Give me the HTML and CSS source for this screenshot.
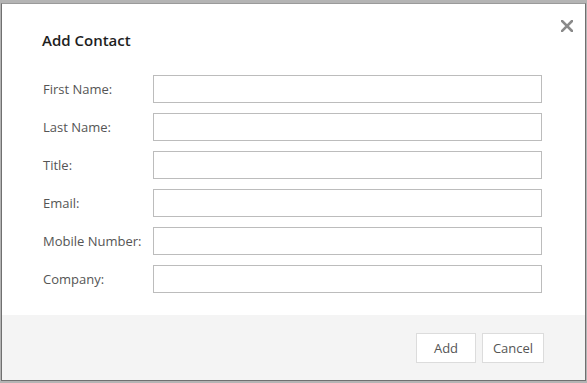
FILE: index.html
```html
<!DOCTYPE html>
<html lang="en">
<head>
  <meta charset="UTF-8" />
  <title>Add Contact</title>
  <link rel="stylesheet" href="styles.css">
</head>
<body>
  <div class="dialog">
    <button class="close" aria-label="Close">
      <svg width="12" height="12" viewBox="0 0 12 12">
        <path d="M1 1 L11 11 M11 1 L1 11" stroke="#8a8a8a" stroke-width="2.6" stroke-linecap="square" />
      </svg>
    </button>

    <div class="dialog-body">
      <h2>Add Contact</h2>
      <form class="contact-form">
        <div class="row"><label>First Name:</label><input type="text" /></div>
        <div class="row"><label>Last Name:</label><input type="text" /></div>
        <div class="row"><label>Title:</label><input type="text" /></div>
        <div class="row"><label>Email:</label><input type="text" /></div>
        <div class="row"><label>Mobile Number:</label><input type="text" /></div>
        <div class="row"><label>Company:</label><input type="text" /></div>
      </form>
    </div>

    <div class="dialog-footer">
      <button class="btn btn-add">Add</button>
      <button class="btn btn-cancel">Cancel</button>
    </div>
  </div>
</body>
</html>
```

FILE: styles.css
```css
html, body {
  height: 100%;
}
body {
  margin: 0;
  background: #b4b4b4;
  font-family: 'Open Sans', sans-serif;
  box-sizing: border-box;
  padding: 3px 1px 2px 1px;
}
.dialog {
  position: relative;
  height: 100%;
  box-sizing: border-box;
  background: #fff;
  border: 1px solid #707070;
  border-top-color: #9a9a9a;
  display: flex;
  flex-direction: column;
}
.close {
  position: absolute;
  top: 14px;
  right: 10px;
  background: transparent;
  border: none;
  padding: 2px;
  cursor: pointer;
  line-height: 0;
}
.dialog-body {
  flex: 1;
  padding: 26px 43px 0 41px;
}
h2 {
  margin: 0 0 25px -1px;
  font-size: 15px;
  line-height: 20px;
  font-weight: 600;
  color: #1e1e1e;
}
.contact-form {
  display: flex;
  flex-direction: column;
  gap: 10px;
}
.row {
  display: flex;
  align-items: center;
}
.row label {
  width: 110px;
  font-size: 13px;
  color: #555;
}
.row input {
  flex: 1;
  height: 28px;
  box-sizing: border-box;
  border: 1px solid #bcbcbc;
  margin: 0;
  padding: 4px 6px;
  font-family: inherit;
  font-size: 13px;
}
.dialog-footer {
  height: 65px;
  background: #f4f4f4;
  display: flex;
  justify-content: flex-end;
  align-items: flex-start;
  gap: 6px;
  padding: 18px 41px 0 0;
  box-sizing: border-box;
}
.btn {
  height: 30px;
  padding: 0;
  background: #fff;
  border: 1px solid #dcdcdc;
  color: #555;
  font-family: inherit;
  font-size: 13px;
  cursor: pointer;
}
.btn-add {
  width: 60px;
}
.btn-cancel {
  width: 62px;
}
```
